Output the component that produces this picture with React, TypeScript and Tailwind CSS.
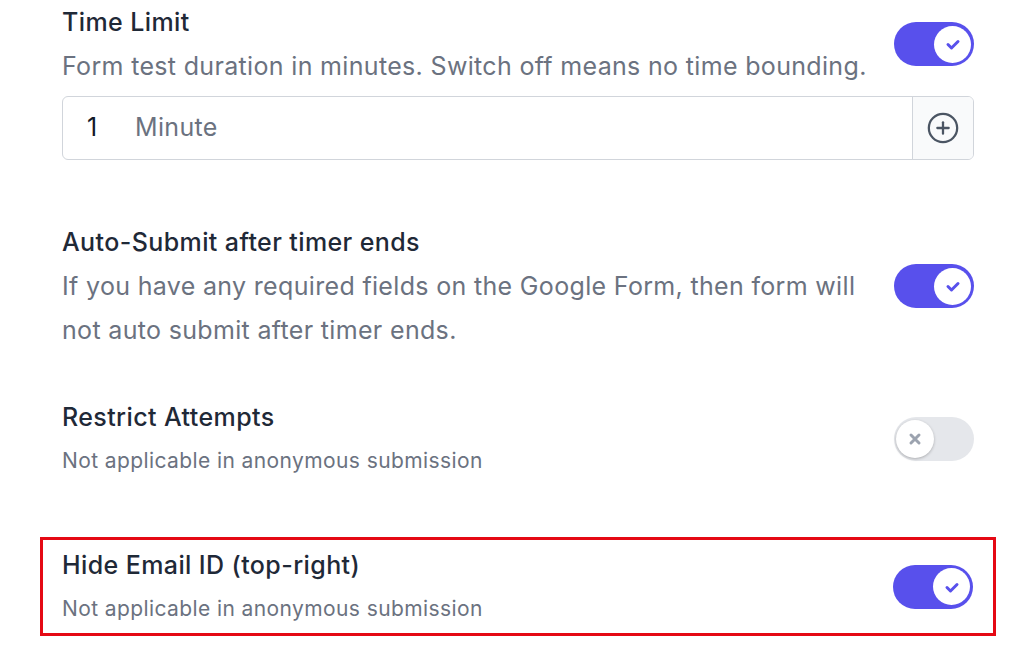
import { CirclePlus } from 'lucide-react';

function Toggle({ on }: { on: boolean }) {
  if (!on) {
    return (
      <div className="relative flex h-[44px] w-[80px] shrink-0 items-center rounded-full bg-[#e5e7eb] px-[2px]">
        <div className="flex h-[38px] w-[38px] items-center justify-center rounded-full bg-white shadow-[0_1px_3px_rgba(0,0,0,0.25)]">
          <svg width="14" height="14" viewBox="0 0 14 14" fill="none">
            <path d="M3 3l8 8M11 3l-8 8" stroke="#9ca3af" strokeWidth="3" strokeLinecap="round" />
          </svg>
        </div>
      </div>
    );
  }
  return (
    <div className="relative flex h-[44px] w-[80px] shrink-0 items-center justify-end rounded-full bg-[#5850ec] px-[3px]">
      <div className="flex h-[37px] w-[37px] items-center justify-center rounded-full bg-white">
        <svg width="16" height="14" viewBox="0 0 16 14" fill="none">
          <path d="M3 7.5L6.5 11L13 4.5" stroke="#5850ec" strokeWidth="3" strokeLinecap="round" strokeLinejoin="round" />
        </svg>
      </div>
    </div>
  );
}

export default function App() {
  return (
    <div className="min-h-[666px] w-[1024px] bg-white font-['Inter',sans-serif]">
      <div className="ml-[62px] w-[912px]">
        {/* Time limit */}
        <div className="flex items-center">
          <div className="flex-1">
            <div className="text-[25px] font-medium leading-[44px] tracking-[0.4px] text-[#1f2937]">Time Limit</div>
            <div className="text-[25px] leading-[44px] tracking-[0.33px] text-[#6b7280]">
              Form test duration in minutes. Switch off means no time bounding.
            </div>
          </div>
          <Toggle on />
        </div>
        <div className="mt-[8px] flex h-[64px] overflow-hidden rounded-[6px] border border-[#d1d5db]">
          <div className="flex flex-1 items-center text-[25px] tracking-[0.33px]">
            <span className="w-[72px] pl-[24px] text-[#111827]">1</span>
            <span className="text-[#6b7280]">Minute</span>
          </div>
          <div className="flex w-[61px] items-center justify-center border-l border-[#d1d5db] bg-[#f9fafb]">
            <CirclePlus size={34} strokeWidth={1.6} className="text-[#4b5563]" />
          </div>
        </div>

        {/* Auto submit */}
        <div className="mt-[60px] flex items-center">
          <div className="flex-1">
            <div className="text-[25px] font-medium leading-[44px] tracking-[0.4px] text-[#1f2937]">Auto-Submit after timer ends</div>
            <div className="text-[25px] leading-[44px] tracking-[0.33px] text-[#6b7280]">
              If you have any required fields on the Google Form, then form will not auto submit after timer ends.
            </div>
          </div>
          <Toggle on />
        </div>

        {/* Restrict attempts */}
        <div className="mt-[43px] flex items-center">
          <div className="flex-1">
            <div className="text-[25px] font-medium leading-[44px] tracking-[0.4px] text-[#1f2937]">Restrict Attempts</div>
            <div className="text-[21px] leading-[44px] tracking-[0.4px] text-[#6b7280]">Not applicable in anonymous submission</div>
          </div>
          <Toggle on={false} />
        </div>

        {/* Hide email */}
        <div className="-mx-[22px] mt-[54px] flex h-[99px] items-center border-[3px] border-[#e50914] pl-[19px] pr-[20px]">
          <div className="flex-1">
            <div className="text-[25px] font-medium leading-[44px] tracking-[0.4px] text-[#1f2937]">Hide Email ID (top-right)</div>
            <div className="text-[21px] leading-[44px] tracking-[0.4px] text-[#6b7280]">Not applicable in anonymous submission</div>
          </div>
          <Toggle on />
        </div>
      </div>
    </div>
  );
}
